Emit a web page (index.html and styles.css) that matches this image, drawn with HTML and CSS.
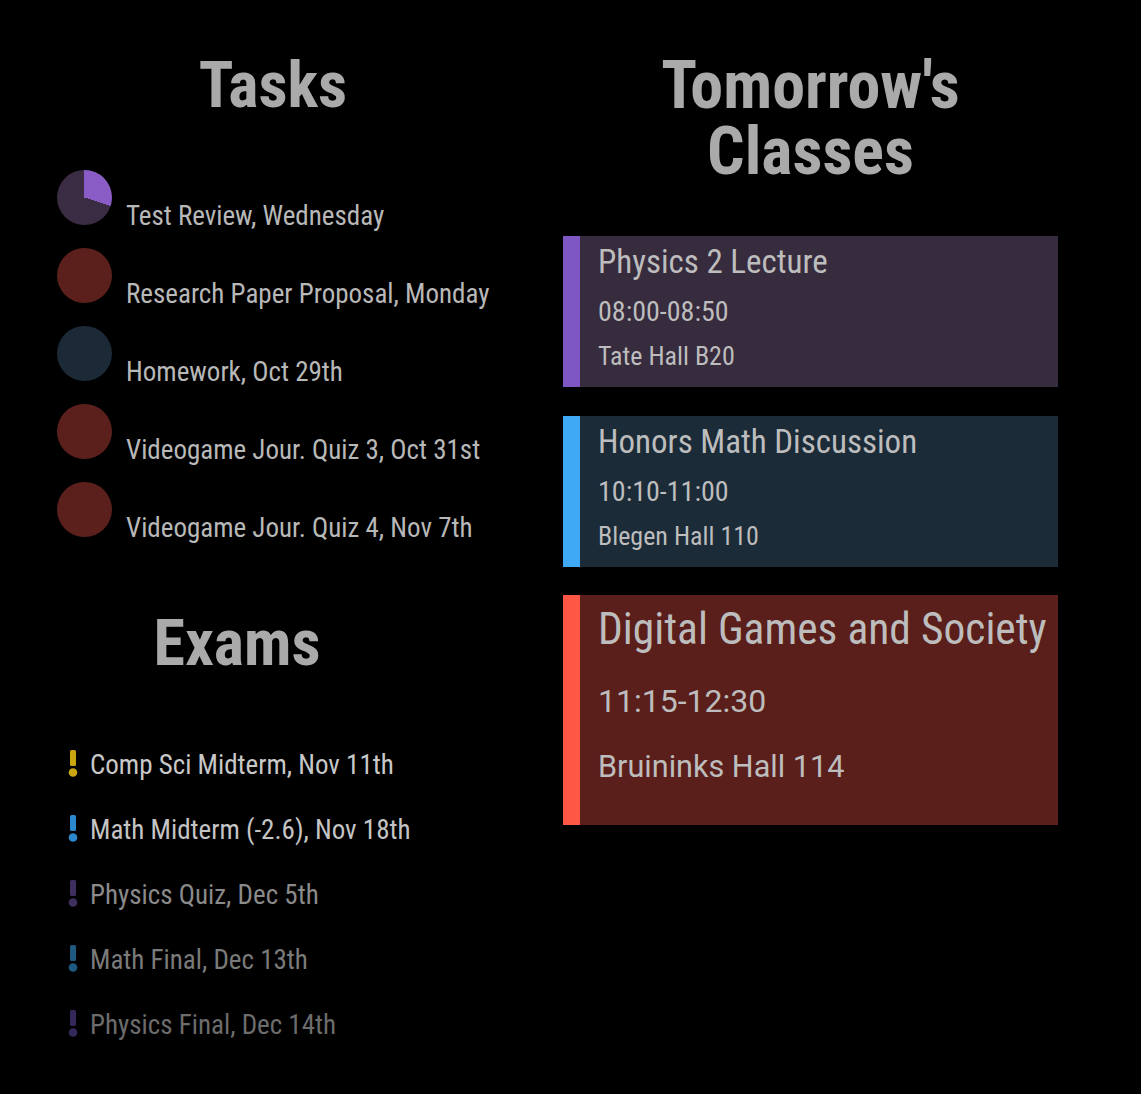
FILE: index.html
```html
<!DOCTYPE html>
<html>
<head>
<meta charset="utf-8">
<link rel="stylesheet" href="styles.css">
</head>
<body>
<div class="page">
  <div class="left">
    <h1 class="heading tasks-h">Tasks</h1>
    <ul class="tasks">
      <li class="task"><span class="dot pie"></span><span class="ttext">Test Review, Wednesday</span></li>
      <li class="task"><span class="dot red"></span><span class="ttext">Research Paper Proposal, Monday</span></li>
      <li class="task"><span class="dot blue"></span><span class="ttext">Homework, Oct 29th</span></li>
      <li class="task"><span class="dot red"></span><span class="ttext">Videogame Jour. Quiz 3, Oct 31st</span></li>
      <li class="task"><span class="dot red"></span><span class="ttext">Videogame Jour. Quiz 4, Nov 7th</span></li>
    </ul>
    <h1 class="heading exams-h">Exams</h1>
    <ul class="exams">
      <li class="exam e1"><svg class="bang" width="10" height="27" viewBox="0 0 10 27"><rect x="2" y="0" width="6" height="16" rx="1.5"/><circle cx="5" cy="22.5" r="4.3"/></svg><span>Comp Sci Midterm, Nov 11th</span></li>
      <li class="exam e2"><svg class="bang" width="10" height="27" viewBox="0 0 10 27"><rect x="2" y="0" width="6" height="16" rx="1.5"/><circle cx="5" cy="22.5" r="4.3"/></svg><span>Math Midterm (-2.6), Nov 18th</span></li>
      <li class="exam e3"><svg class="bang" width="10" height="27" viewBox="0 0 10 27"><rect x="2" y="0" width="6" height="16" rx="1.5"/><circle cx="5" cy="22.5" r="4.3"/></svg><span>Physics Quiz, Dec 5th</span></li>
      <li class="exam e4"><svg class="bang" width="10" height="27" viewBox="0 0 10 27"><rect x="2" y="0" width="6" height="16" rx="1.5"/><circle cx="5" cy="22.5" r="4.3"/></svg><span>Math Final, Dec 13th</span></li>
      <li class="exam e5"><svg class="bang" width="10" height="27" viewBox="0 0 10 27"><rect x="2" y="0" width="6" height="16" rx="1.5"/><circle cx="5" cy="22.5" r="4.3"/></svg><span>Physics Final, Dec 14th</span></li>
    </ul>
  </div>
  <div class="right">
    <h1 class="heading classes-h">Tomorrow's<br>Classes</h1>
    <div class="card purple">
      <div class="ctitle">Physics 2 Lecture</div>
      <div class="cline">08:00-08:50</div>
      <div class="cline loc">Tate Hall B20</div>
    </div>
    <div class="card sky">
      <div class="ctitle">Honors Math Discussion</div>
      <div class="cline">10:10-11:00</div>
      <div class="cline loc">Blegen Hall 110</div>
    </div>
    <div class="card coral big">
      <div class="ctitle">Digital Games and Society</div>
      <div class="cline">11:15-12:30</div>
      <div class="cline loc">Bruininks Hall 114</div>
    </div>
  </div>
</div>
</body>
</html>
```
FILE: styles.css
```css
html, body {
  margin: 0;
  padding: 0;
  background: #000;
}
body {
  font-family: "Roboto Condensed", Roboto, sans-serif;
  font-stretch: condensed;
  color: #b4b4b4;
}
.page {
  display: flex;
  width: 1141px;
  height: 1094px;
}
.left {
  width: 505px;
  padding-left: 57px;
  box-sizing: border-box;
}
.right {
  width: 495px;
  margin-left: 58px;
}
.heading {
  margin: 0;
  font-weight: 700;
  font-size: 64px;
  line-height: 65px;
  color: #aaaaaa;
  text-align: center;
}
.tasks-h {
  padding-top: 53px;
  width: 432px;
}
.tasks {
  list-style: none;
  margin: 0;
  padding: 0;
  margin-top: 52px;
}
.task {
  height: 78px;
  font-size: 27px;
  color: #b8b8b8;
  white-space: nowrap;
}
.dot {
  display: inline-block;
  width: 55px;
  height: 55px;
  border-radius: 50%;
  margin-right: 14px;
  vertical-align: baseline;
}
.pie { background: conic-gradient(#8a5cc6 0 30%, #3a2c42 30% 100%); }
.red { background: #5c201c; }
.blue { background: #1b2a36; }
.exams-h {
  margin-top: 51px;
  width: 360px;
}
.exams {
  list-style: none;
  margin: 0;
  padding: 0 0 0 11px;
  margin-top: 73px;
}
.exam {
  height: 65px;
  font-size: 27px;
  white-space: nowrap;
}
.bang {
  vertical-align: -3px;
  margin-right: 12px;
}
.e1 { color: #c8c8c8; }
.e1 .bang { fill: #c9a512; }
.e2 { color: #c4c4c4; }
.e2 .bang { fill: #2b88cc; }
.e3 { color: #8a8a8a; }
.e3 .bang { fill: #3e2f5e; }
.e4 { color: #7a7a7a; }
.e4 .bang { fill: #1e5a80; }
.e5 { color: #6c6c6c; }
.e5 .bang { fill: #35285a; }
.classes-h {
  padding-top: 53px;
  margin-bottom: 53px;
  font-size: 66px;
  line-height: 66px;
}
.classes-h + .card { margin-top: -2px; }
.card {
  height: 151px;
  border-left: 17px solid;
  box-sizing: border-box;
  padding-left: 18px;
  margin-bottom: 29px;
  color: #bdbdbd;
}
.purple { border-color: #7e57c2; background: #372b3e; }
.sky { border-color: #3fa9f5; background: #1b2b38; }
.coral { border-color: #ff5745; background: #5a1f1b; height: 230px; margin-top: -1px; }
.ctitle {
  font-size: 33px;
  line-height: 40px;
  padding-top: 6px;
}
.cline {
  font-size: 28px;
  line-height: 45px;
}
.cline.loc { font-size: 26px; }
.ctitle + .cline { margin-top: 7px; }
.big .ctitle {
  font-size: 43.5px;
  line-height: 54px;
  padding-top: 8px;
  white-space: nowrap;
}
.big .cline {
  font-family: Roboto, sans-serif;
  font-stretch: normal;
  font-size: 32px;
  line-height: 65px;
}
.big .cline.loc { font-size: 30.6px; }
.big .ctitle + .cline { margin-top: 12px; }
```
